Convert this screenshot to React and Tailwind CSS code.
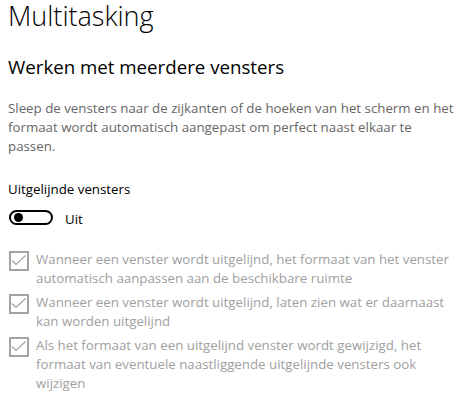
const OPTIONS = [
  'Wanneer een venster wordt uitgelijnd, het formaat van het venster automatisch aanpassen aan de beschikbare ruimte',
  'Wanneer een venster wordt uitgelijnd, laten zien wat er daarnaast kan worden uitgelijnd',
  'Als het formaat van een uitgelijnd venster wordt gewijzigd, het formaat van eventuele naastliggende uitgelijnde vensters ook wijzigen',
]

function CheckBox() {
  return (
    <span className="mt-[1px] flex h-[20px] w-[20px] shrink-0 items-center justify-center border-2 border-[#a3a3a3]">
      <svg width="16" height="16" viewBox="0 0 16 16" fill="none">
        <polyline points="1,7.5 5,11.5 14.5,2.5" stroke="#a3a3a3" strokeWidth="1.2" />
      </svg>
    </span>
  )
}

export default function App() {
  return (
    <div className="h-[398px] w-[465px] overflow-hidden bg-white pl-2 pr-[4px] font-['Open_Sans',sans-serif] text-black">
      <h1 className="text-[27px] font-light leading-[32px]">Multitasking</h1>
      <h2 className="mt-[22px] text-[18.7px] leading-[26px]">Werken met meerdere vensters</h2>
      <p className="mt-[19px] text-[13.3px] leading-[19px] text-[#666]">
        Sleep de vensters naar de zijkanten of de hoeken van het scherm en het formaat wordt automatisch aangepast om perfect naast elkaar te passen.
      </p>

      <div className="mt-[24px] text-[13.3px] leading-[19px]">Uitgelijnde vensters</div>
      <div className="mt-[9px] flex h-[19px] items-center gap-3 pl-[1px]">
        <span className="flex h-[15px] w-[44px] items-center rounded-full border-2 border-black pl-[3px]">
          <span className="h-[9px] w-[9px] rounded-full bg-black" />
        </span>
        <span className="pt-[3px] text-[13.3px] leading-[19px]">Uit</span>
      </div>

      <div className="mt-[23px] flex flex-col gap-[5px] pl-[1px]">
        {OPTIONS.map(text => (
          <div key={text} className="flex items-start gap-[7px]">
            <CheckBox />
            <span className="text-[13.3px] leading-[19px] text-[#a0a0a0]">{text}</span>
          </div>
        ))}
      </div>
    </div>
  )
}
